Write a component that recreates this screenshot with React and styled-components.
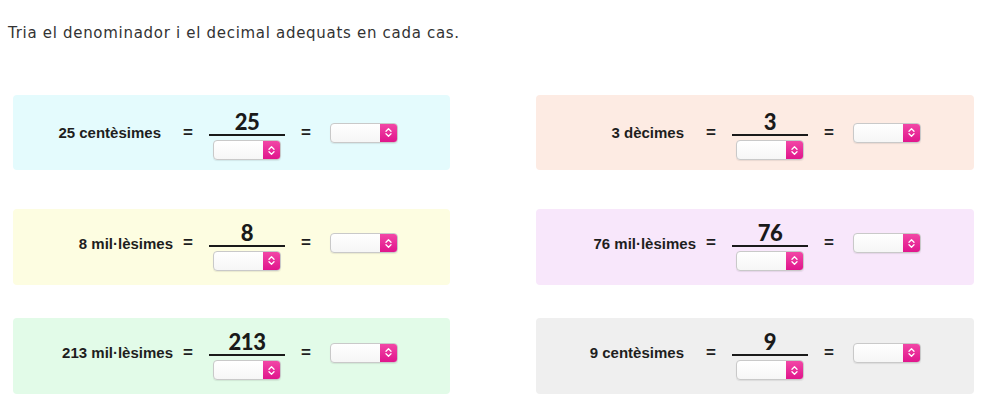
import React from 'react'
import styled, { createGlobalStyle } from 'styled-components'

const GlobalStyle = createGlobalStyle`
  body {
    margin: 0;
    background: #ffffff;
  }
`

const Page = styled.div`
  padding: 25px 0 0 8px;
`

const Instruction = styled.p`
  margin: 0;
  font-family: "DejaVu Sans", Verdana, sans-serif;
  font-size: 15px;
  letter-spacing: 0.7px;
  line-height: 17px;
  color: #333333;
`

const Grid = styled.div`
  display: grid;
  grid-template-columns: 437px 438px;
  column-gap: 86px;
  row-gap: 33px;
  margin: 53px 0 0 5px;
`

const Card = styled.div`
  display: flex;
  align-items: center;
  box-sizing: border-box;
  height: ${(p) => p.h}px;
  margin-top: ${(p) => p.mt || 0}px;
  padding-bottom: ${(p) => p.pb || 0}px;
  border-radius: 4px;
  background: ${(p) => p.bg};
`

const Label = styled.div`
  width: 160px;
  box-sizing: border-box;
  padding-right: ${(p) => (p.wide ? 12 : 0)}px;
  text-align: right;
  font-family: "Liberation Sans", Arial, sans-serif;
  font-weight: bold;
  font-size: 15px;
  color: #1e1e1e;
  white-space: nowrap;
`

const Eq = styled.div`
  width: 30px;
  margin-left: ${(p) => p.offset || 0}px;
  text-align: center;
  font-family: "Liberation Sans", Arial, sans-serif;
  font-weight: bold;
  font-size: 17px;
  color: #1e1e1e;
`

const Fraction = styled.div`
  display: flex;
  flex-direction: column;
  align-items: center;
  width: 76px;
  margin: 5px 0 0 6px;
`

const Numerator = styled.div`
  width: 100%;
  text-align: center;
  font-family: Lato, "Open Sans", sans-serif;
  font-weight: 900;
  font-size: 22px;
  letter-spacing: -0.5px;
  line-height: 24px;
  color: #1a1a1a;
  border-bottom: 2px solid #1a1a1a;
`

const SelectBox = styled.div`
  display: flex;
  width: 68px;
  height: 20px;
  box-sizing: border-box;
  margin-top: ${(p) => p.top || 0}px;
  margin-left: ${(p) => p.left || 0}px;
  border: 1px solid #c9c9c9;
  border-radius: 4px;
  overflow: hidden;
  background: linear-gradient(#ffffff, #f6f6f6);
  box-shadow: 0 1px 1px rgba(0, 0, 0, 0.08);
`

const Field = styled.div`
  flex: 1;
`

const Arrow = styled.div`
  width: 17px;
  display: flex;
  align-items: center;
  justify-content: center;
  background: linear-gradient(#f247a6, #e0158c);
`

const Chevrons = () => (
  <svg width="7" height="11" viewBox="0 0 7 11">
    <path d="M1 4.2 L3.5 1.8 L6 4.2 M1 6.8 L3.5 9.2 L6 6.8" fill="none" stroke="#ffffff" strokeWidth="1.3" strokeLinecap="round" strokeLinejoin="round" />
  </svg>
)

const Select = (props) => (
  <SelectBox {...props}>
    <Field />
    <Arrow><Chevrons /></Arrow>
  </SelectBox>
)

const items = [
  { label: '25 centèsimes', num: '25', bg: '#e4fbfd', wide: true, h: 75 },
  { label: '3 dècimes', num: '3', bg: '#fdebe3', wide: true, h: 75 },
  { label: '8 mil·lèsimes', num: '8', bg: '#fdfde1', h: 76, mt: 6, pb: 8 },
  { label: '76 mil·lèsimes', num: '76', bg: '#f8e7fb', h: 76, mt: 6, pb: 8 },
  { label: '213 mil·lèsimes', num: '213', bg: '#e2fbe8', h: 76, pb: 7 },
  { label: '9 centèsimes', num: '9', bg: '#efefef', wide: true, h: 76, pb: 7 },
]

export default function App() {
  return (
    <Page>
      <GlobalStyle />
      <Instruction>Tria el denominador i el decimal adequats en cada cas.</Instruction>
      <Grid>
        {items.map((it) => (
          <Card key={it.label} bg={it.bg} h={it.h} mt={it.mt} pb={it.pb}>
            <Label wide={it.wide}>{it.label}</Label>
            <Eq>=</Eq>
            <Fraction>
              <Numerator>{it.num}</Numerator>
              <Select top={4} />
            </Fraction>
            <Eq offset={6}>=</Eq>
            <Select left={9} />
          </Card>
        ))}
      </Grid>
    </Page>
  )
}
